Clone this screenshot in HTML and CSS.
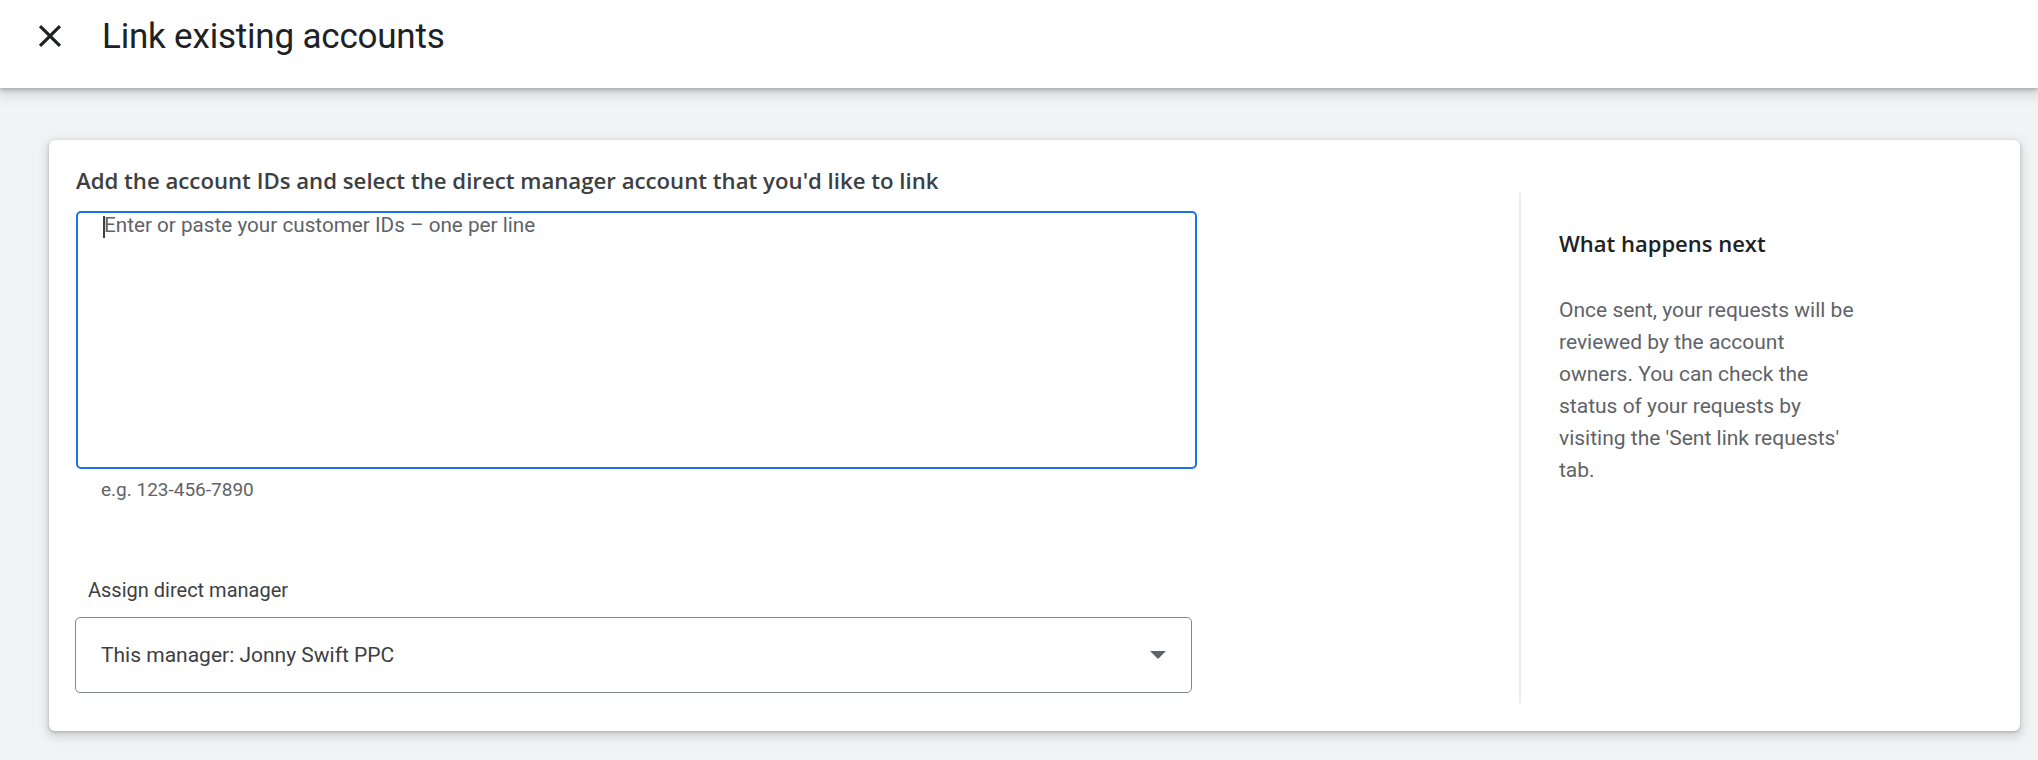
FILE: index.html
```html
<!DOCTYPE html>
<html lang="en">
<head>
<meta charset="utf-8">
<title>Link existing accounts</title>
<link rel="stylesheet" href="styles.css">
</head>
<body>
<header class="topbar">
  <button class="close" aria-label="Close">
    <svg viewBox="0 0 24 24" width="38" height="38"><path d="M19 6.41 17.59 5 12 10.59 6.41 5 5 6.41 10.59 12 5 17.59 6.41 19 12 13.41 17.59 19 19 17.59 13.41 12z" fill="#202124"/></svg>
  </button>
  <h1 class="title">Link existing accounts</h1>
</header>
<main class="page">
  <section class="card">
    <div class="form">
      <h2 class="heading">Add the account IDs and select the direct manager account that you'd like to link</h2>
      <div class="idfield" role="textbox" aria-multiline="true">
        <span class="caret"></span><span class="placeholder">Enter or paste your customer IDs – one per line</span>
      </div>
      <div class="hint">e.g. 123-456-7890</div>
      <div class="label">Assign direct manager</div>
      <div class="select">
        <span class="select-value">This manager: Jonny Swift PPC</span>
        <span class="arrow"></span>
      </div>
    </div>
    <aside class="side">
      <h3 class="side-title">What happens next</h3>
      <p class="side-text">Once sent, your requests will be reviewed by the account owners. You can check the status of your requests by visiting the 'Sent link requests' tab.</p>
    </aside>
  </section>
</main>
</body>
</html>
```
FILE: styles.css
```css
* { box-sizing: border-box; }
html, body { margin: 0; height: 100%; }
body {
  background: #f1f3f4;
  font-family: Roboto, "Liberation Sans", Arial, sans-serif;
  color: #202124;
  overflow: hidden;
}
.topbar {
  height: 88px;
  background: #fff;
  display: flex;
  align-items: center;
  padding-left: 31px;
  box-shadow: 0 2px 4px rgba(60,64,67,.3), 0 6px 10px 2px rgba(60,64,67,.15);
  position: relative;
  z-index: 1;
}
.close {
  border: 0;
  background: none;
  padding: 0;
  width: 38px;
  height: 38px;
  display: flex;
  cursor: pointer;
  margin-top: -16px;
}
.title {
  margin: -16px 0 0 33px;
  font-size: 35px;
  font-weight: 400;
  color: #202124;
  letter-spacing: -0.2px;
}
.page {
  padding: 52px 18px 0 49px;
}
.card {
  background: #fff;
  height: 591px;
  border-radius: 6px;
  box-shadow: 0 1px 3px rgba(60,64,67,.3), 0 4px 8px 3px rgba(60,64,67,.15);
  display: flex;
}
.form {
  width: 1148px;
  padding: 27px 0 0 27px;
}
.heading {
  margin: 0;
  font-family: "Open Sans", Roboto, sans-serif;
  font-size: 22.2px;
  line-height: 28px;
  font-weight: 600;
  color: #3c4043;
}
.idfield {
  margin-top: 16px;
  width: 1121px;
  height: 258px;
  border: 2px solid #1a73e8;
  border-radius: 5px;
  padding: 0 0 0 26px;
  font-size: 20.7px;
  line-height: 24px;
  display: flex;
  align-items: flex-start;
}
.caret {
  width: 2px;
  height: 22px;
  margin-top: 3px;
  background: #3c4043;
  margin-left: -1px;
  margin-right: -1px;
}
.placeholder {
  color: #5f6368;
}
.hint {
  margin: 9px 0 0 25px;
  font-size: 19px;
  line-height: 24px;
  color: #5f6368;
}
.label {
  margin: 76px 0 0 12px;
  font-size: 20px;
  line-height: 24px;
  color: #3c4043;
}
.select {
  margin-top: 15px;
  margin-left: -1px;
  width: 1117px;
  height: 76px;
  border: 1px solid #80868b;
  border-radius: 5px;
  display: flex;
  align-items: center;
  justify-content: space-between;
  padding: 0 25px;
}
.select-value {
  font-size: 21px;
  color: #3c4043;
}
.arrow {
  width: 0;
  height: 0;
  border-left: 8px solid transparent;
  border-right: 8px solid transparent;
  border-top: 8px solid #5f6368;
}
.side {
  margin: 53px 0 28px 322px;
  border-left: 2px solid #ececec;
  padding: 36px 0 0 38px;
}
.side-title {
  margin: 0;
  font-family: "Open Sans", Roboto, sans-serif;
  font-size: 22px;
  line-height: 28px;
  font-weight: 600;
  color: #202124;
}
.side-text {
  margin: 37px 0 0;
  width: 299px;
  font-size: 21px;
  line-height: 32px;
  color: #5f6368;
}
```
